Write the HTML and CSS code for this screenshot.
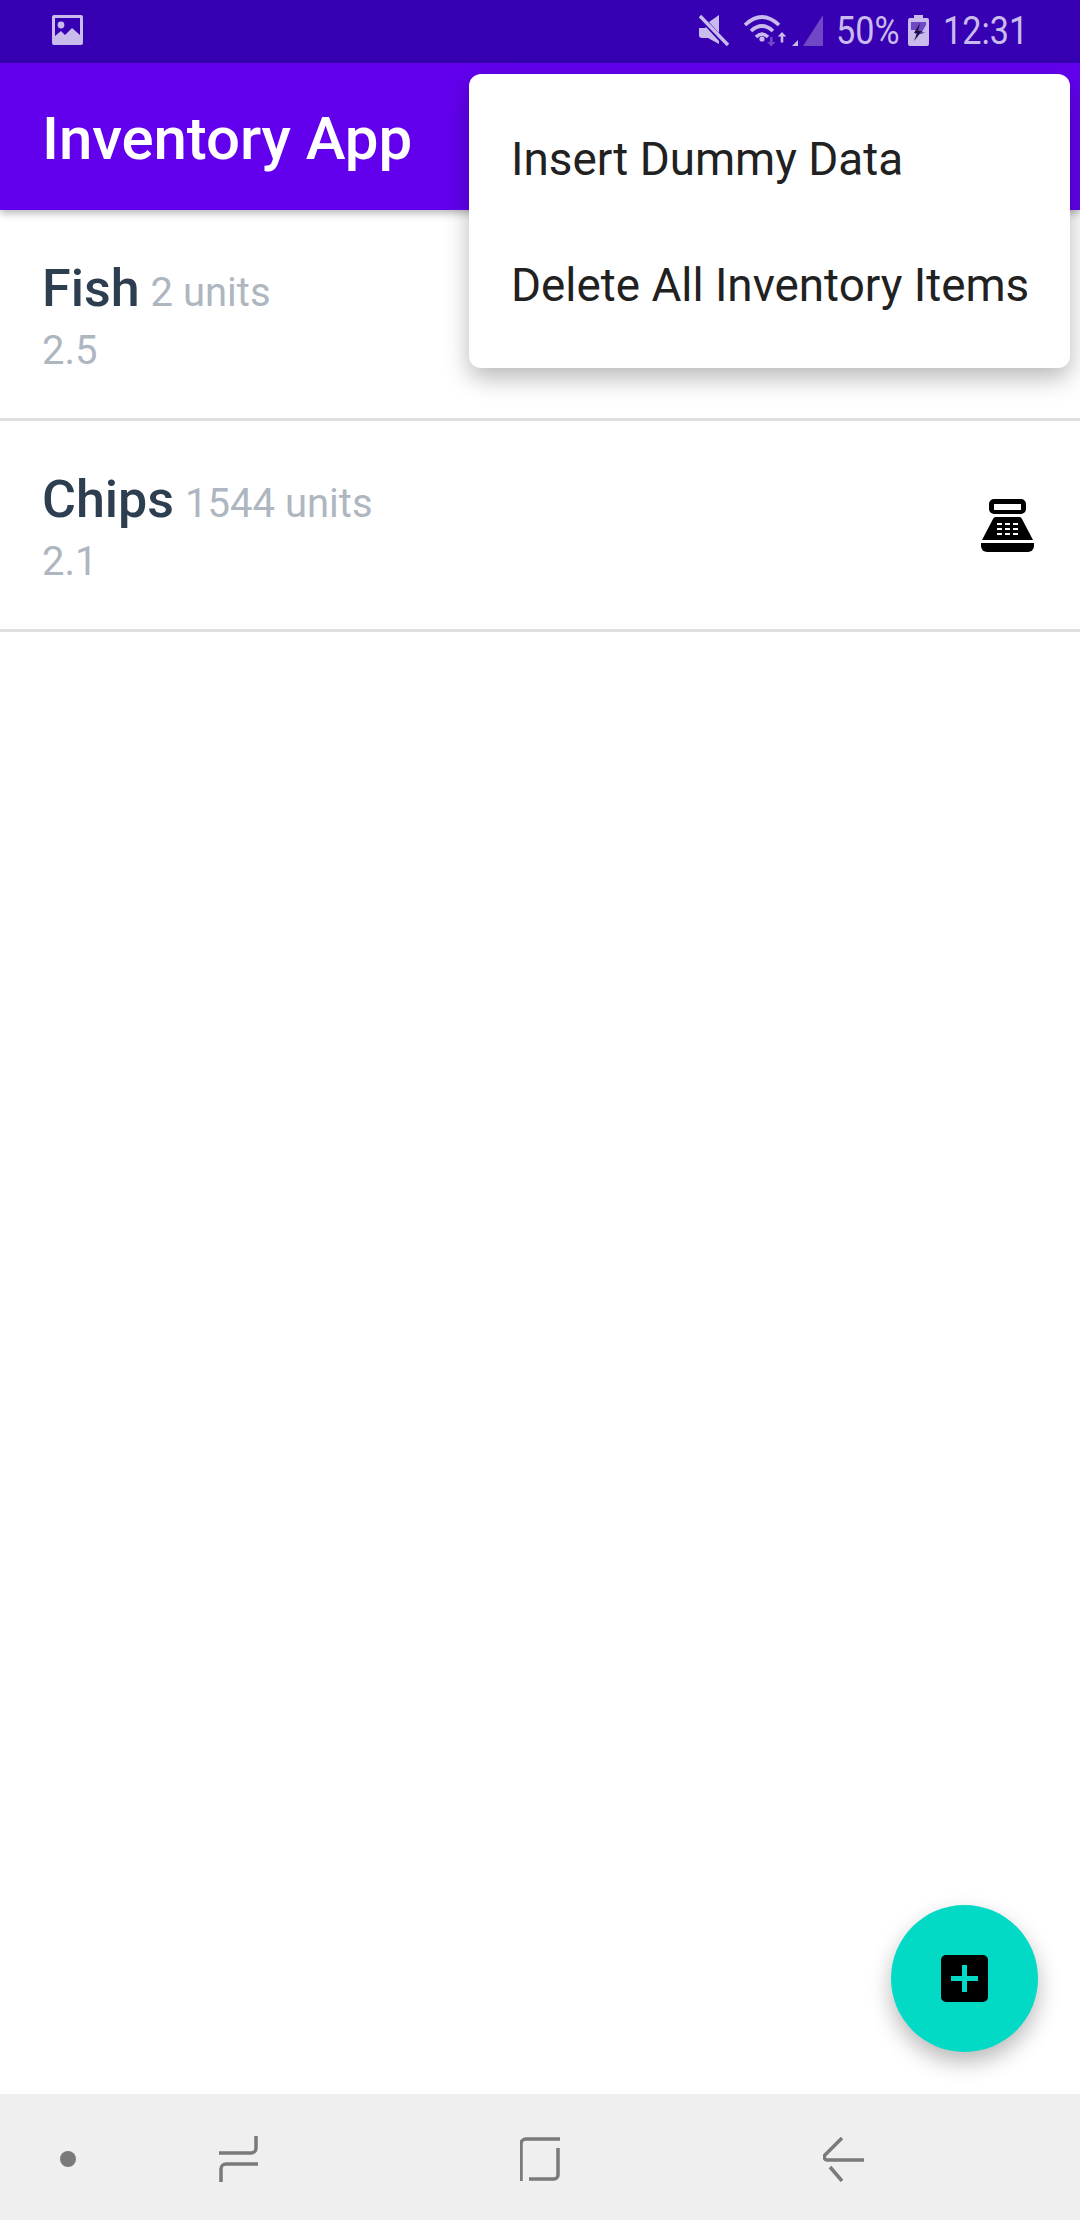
FILE: index.html
```html
<!DOCTYPE html>
<html lang="en">
<head>
<meta charset="utf-8">
<title>Inventory App</title>
<link rel="stylesheet" href="styles.css">
</head>
<body>
<div class="screen">
  <header class="status">
    <svg class="ic-image" viewBox="0 0 31 30"><path fill-rule="evenodd" d="M2 0h27a2 2 0 0 1 2 2v26a2 2 0 0 1-2 2H2a2 2 0 0 1-2-2V2a2 2 0 0 1 2-2zM3 3v18l6-5 4 4 7-7 8 7V3z"/><circle cx="9" cy="10" r="3.4"/></svg>
    <div class="status-right">
      <svg class="ic-mute" viewBox="0 0 30 31"><path d="M0 13h6l1-1 13 14v3L9 23H3a3 3 0 0 1-3-3zM10 7l10-7v18z"/><path class="slash" d="M1 1l28 29"/></svg>
      <svg class="ic-net" viewBox="0 0 79 32">
        <g class="wifi"><path d="M1 10Q18-6 35 10"/><path d="M7 16Q18 6 29 16"/><path d="M12 22Q18 16 24 22"/></g>
        <circle class="fg" cx="18" cy="24" r="2.6"/>
        <path class="dim" d="M26 22h2.600v5h3l-4.300 4.500-4.300-4.500h3z"/>
        <path class="fg" d="M38 17l4.300 4.500h-3v6h-2.600v-6h-3z"/>
        <path class="fg" d="M48 31l6-6v6z"/>
        <path class="dim" d="M59 31L79 0v31z"/>
      </svg>
      <span class="pct">50%</span>
      <svg class="ic-batt" viewBox="0 0 21 31"><path fill-rule="evenodd" d="M6 0h9v3h4a2 2 0 0 1 2 2v24a2 2 0 0 1-2 2H2a2 2 0 0 1-2-2V5a2 2 0 0 1 2-2h4z"/><path class="bolt-top" d="M3 7h15v3l-4 7h3l-3 2H7l1-4H3z"/><path class="bolt" d="M12 8l-2 8h4L6 26l3-8H6z"/></svg>
      <span class="clock">12:31</span>
    </div>
  </header>

  <div class="appbar"><h1 class="title">Inventory App</h1></div>

  <main class="list">
    <article class="row">
      <div class="row-text">
        <div class="row-head"><span class="name">Fish</span><span class="qty">2 units</span></div>
        <div class="price">2.5</div>
      </div>
      <svg class="ic-register" viewBox="0 0 53 53"><use href="#register"/></svg>
    </article>
    <article class="row">
      <div class="row-text">
        <div class="row-head"><span class="name">Chips</span><span class="qty">1544 units</span></div>
        <div class="price">2.1</div>
      </div>
      <svg class="ic-register" viewBox="0 0 53 53">
        <g id="register">
          <path fill-rule="evenodd" d="M13 0h27a5 5 0 0 1 5 5v5a5 5 0 0 1-5 5H13a5 5 0 0 1-5-5V5a5 5 0 0 1 5-5zM13 5v6h27V5z"/>
          <path fill-rule="evenodd" d="M15 18h23a3 3 0 0 1 3 2l11 21H1l11-21a3 3 0 0 1 3-2zM16 24v2h5v-2zM24 24v2h5v-2zM32 24v2h5v-2zM16 29v2h5v-2zM24 29v2h5v-2zM32 29v2h5v-2zM16 34v2h5v-2zM24 34v2h5v-2zM32 34v2h5v-2z"/>
          <path d="M0 44h53v3a6 6 0 0 1-6 6H6a6 6 0 0 1-6-6z"/>
        </g>
      </svg>
    </article>
  </main>

  <nav class="navbar">
    <span class="nav-dot"></span>
    <svg class="nav-ic nav-recents" viewBox="0 0 39 46"><path d="M37 0v12a5 5 0 0 1-5 5H0"/><path d="M39 28H7a5 5 0 0 0-5 5v13"/></svg>
    <svg class="nav-ic nav-home" viewBox="0 0 40 44"><path d="M40 2H6a5 5 0 0 0-5 5v37"/><path d="M38 11v27a4 4 0 0 1-4 4H9"/></svg>
    <svg class="nav-ic nav-back" viewBox="0 0 41 45"><path d="M19 1L2 18a3 3 0 0 0 2 5h37"/><path d="M7 30l12 14"/></svg>
  </nav>

  <div class="menu">
    <div class="menu-item">Insert Dummy Data</div>
    <div class="menu-item">Delete All Inventory Items</div>
  </div>

  <button class="fab" type="button" aria-label="Add">
    <svg class="ic-add" viewBox="0 0 47 47"><path fill-rule="evenodd" d="M5 0h37a5 5 0 0 1 5 5v37a5 5 0 0 1-5 5H5a5 5 0 0 1-5-5V5a5 5 0 0 1 5-5zM21 10v11H10v5h11v11h5V26h11v-5H26V10z"/></svg>
  </button>
</div>
</body>
</html>
```
FILE: styles.css
```css
* { box-sizing: border-box; margin: 0; padding: 0; }
html, body { width: 1080px; height: 2220px; background: #fff; overflow: hidden; }
body { font-family: Roboto, "Noto Sans", sans-serif; }

.screen { position: relative; width: 1080px; height: 2220px; display: flex; flex-direction: column; background: #fff; }

.status { height: 63px; flex: none; background: #3700b3; display: flex; align-items: flex-start; justify-content: space-between; padding: 15px 58px 0 52px; color: #c9bbeb; }
.status-right { display: flex; align-items: flex-start; }
.ic-image { width: 31px; height: 30px; fill: #c9bbeb; }
.ic-mute { width: 30px; height: 31px; fill: #c9bbeb; margin-right: 15px; }
.ic-mute .slash { stroke: #c9bbeb; stroke-width: 3.5; fill: none; }
.ic-net { width: 79px; height: 32px; margin-right: 13px; }
.ic-net .wifi path { fill: none; stroke: #c9bbeb; stroke-width: 3.6; }
.ic-net .fg { fill: #c9bbeb; }
.ic-net .dim { fill: #7048c6; }
.pct, .clock { font-size: 38px; line-height: 32px; display: inline-block; transform-origin: left center; transform: scaleX(.9); letter-spacing: 0; }
.pct { width: 72px; }
.clock { width: 79px; }
.ic-batt { width: 21px; height: 31px; fill: #c9bbeb; margin-right: 14px; }
.ic-batt .bolt-top { fill: #7048c6; }
.ic-batt .bolt { fill: #1f1140; }

.appbar { height: 147px; flex: none; background: #6200ee; display: flex; align-items: center; padding: 4px 0 0 42px; box-shadow: 0 3px 8px rgba(0,0,0,.3); position: relative; z-index: 1; }
.title { font-size: 60px; font-weight: 500; color: #fff; line-height: 70px; letter-spacing: -.1px; }

.list { flex: 1; display: flex; flex-direction: column; }
.row { height: 211px; flex: none; display: flex; align-items: center; justify-content: space-between; padding: 0 46px 0 42px; border-bottom: 3px solid #e0e0e0; }
.row-text { display: flex; flex-direction: column; padding-top: 2px; }
.row-head { display: flex; align-items: baseline; gap: 11px; }
.name { font-size: 52px; font-weight: 500; color: #2c3e50; line-height: 60px; }
.qty { font-size: 40px; color: #aeb6bf; }
.price { font-size: 40px; color: #aeb6bf; line-height: 50px; margin-top: 7px; margin-bottom: -5px; }
.ic-register { width: 53px; height: 53px; fill: #000; }

.navbar { height: 126px; flex: none; background: #efefef; display: flex; align-items: center; padding: 4px 0 0 60px; }
.nav-dot { width: 16px; height: 16px; border-radius: 50%; background: #7a7a7a; flex: none; }
.nav-ic { flex: none; fill: none; stroke: #7a7a7a; stroke-width: 3.5; }
.nav-recents { width: 39px; height: 46px; margin-left: 143px; }
.nav-home { width: 40px; height: 44px; margin-left: 262px; }
.nav-back { width: 41px; height: 45px; margin-left: 263px; }

.menu { position: absolute; left: 469px; top: 74px; width: 601px; height: 294px; padding: 21px 0; background: #fff; border-radius: 12px; box-shadow: 0 10px 24px rgba(0,0,0,.28); z-index: 2; }
.menu-item { height: 126px; display: flex; align-items: center; padding: 3px 0 0 42px; font-size: 45.8px; color: #212121; }

.fab { position: absolute; left: 891px; top: 1905px; width: 147px; height: 147px; border: 0; border-radius: 50%; background: #03dac5; display: flex; align-items: center; justify-content: center; box-shadow: 0 10px 22px rgba(0,0,0,.28); z-index: 2; }
.ic-add { width: 47px; height: 47px; fill: #000; }
```
